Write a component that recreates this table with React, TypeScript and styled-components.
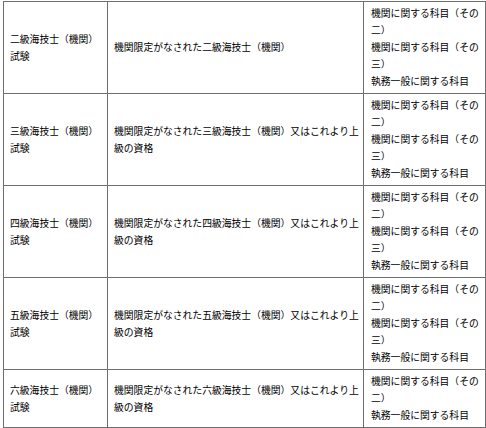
import React from 'react';
import styled, { createGlobalStyle } from 'styled-components';

const GlobalStyle = createGlobalStyle`
  html, body {
    margin: 0;
    padding: 0;
    background: #ffffff;
  }
`;

type Row = {
  exam: string;
  qualification: string;
  subjects: string[];
};

const subjectsFull = [
  '機関に関する科目（その二）',
  '機関に関する科目（その三）',
  '執務一般に関する科目',
];

const rows: Row[] = [
  {
    exam: '二級海技士（機関）試験',
    qualification: '機関限定がなされた二級海技士（機関）',
    subjects: subjectsFull,
  },
  {
    exam: '三級海技士（機関）試験',
    qualification: '機関限定がなされた三級海技士（機関）又はこれより上級の資格',
    subjects: subjectsFull,
  },
  {
    exam: '四級海技士（機関）試験',
    qualification: '機関限定がなされた四級海技士（機関）又はこれより上級の資格',
    subjects: subjectsFull,
  },
  {
    exam: '五級海技士（機関）試験',
    qualification: '機関限定がなされた五級海技士（機関）又はこれより上級の資格',
    subjects: subjectsFull,
  },
  {
    exam: '六級海技士（機関）試験',
    qualification: '機関限定がなされた六級海技士（機関）又はこれより上級の資格',
    subjects: ['機関に関する科目（その二）', '執務一般に関する科目'],
  },
];

export default function App() {
  return (
    <Page>
      <GlobalStyle />
      <Table>
        <colgroup>
          <col style={{ width: 104 }} />
          <col style={{ width: 256 }} />
          <col style={{ width: 122 }} />
        </colgroup>
        <tbody>
          {rows.map((row) => (
            <tr key={row.exam}>
              <Cell>{row.exam}</Cell>
              <Cell>{row.qualification}</Cell>
              <SubjectCell>
                {row.subjects.map((s) => (
                  <Subject key={s}>{s}</Subject>
                ))}
              </SubjectCell>
            </tr>
          ))}
        </tbody>
      </Table>
    </Page>
  );
}

const Page = styled.div`
  padding: 1px 0 0 3px;
`;

const Table = styled.table`
  width: 482px;
  table-layout: fixed;
  border-collapse: collapse;
  font-family: 'Noto Sans CJK JP', 'Noto Sans', sans-serif;
  font-size: 9.8px;
  line-height: 17px;
  color: #000000;
`;

const Cell = styled.td`
  border: 1px solid #6e6e6e;
  padding: 3px 2px 3px 6px;
  vertical-align: middle;
  text-align: left;
`;

const SubjectCell = styled(Cell)`
  padding-left: 7px;
`;

const Subject = styled.div`
  margin: 0;
`;
